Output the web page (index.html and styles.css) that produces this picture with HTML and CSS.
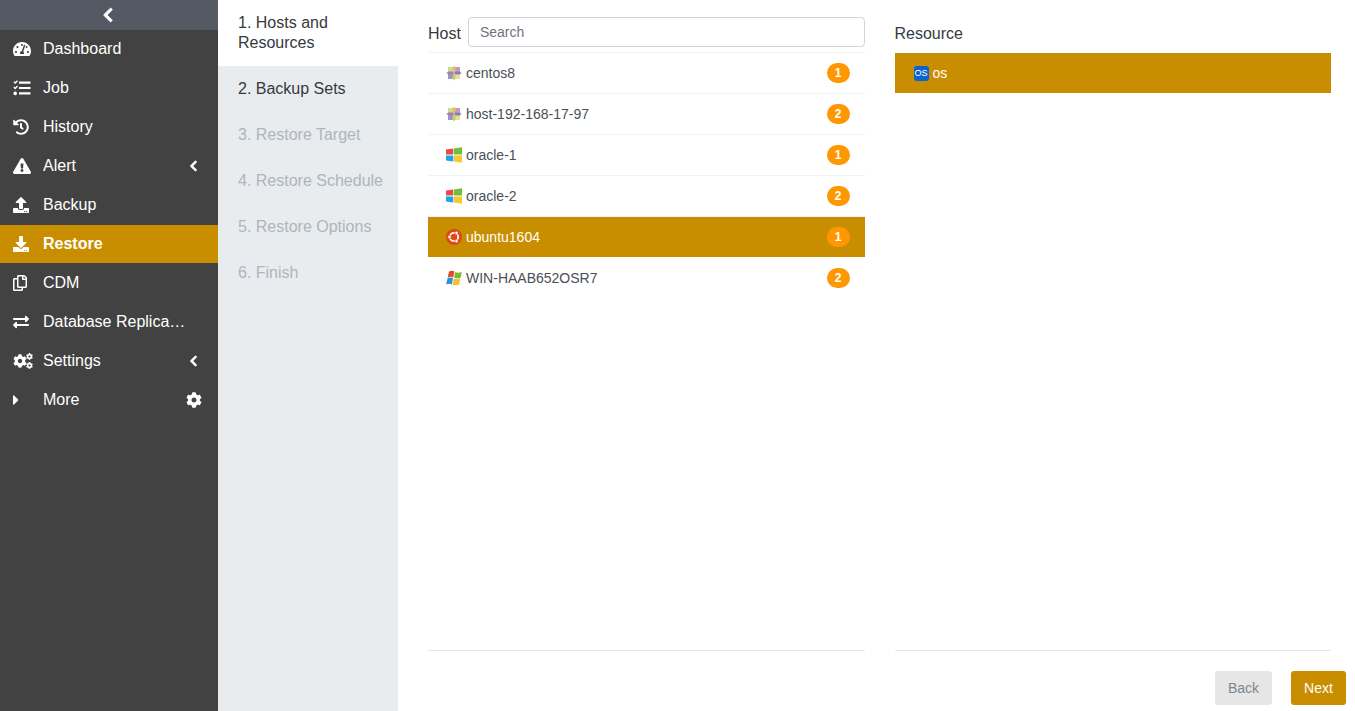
FILE: index.html
```html
<!DOCTYPE html>
<html lang="en">
<head>
    <meta charset="UTF-8">
    <meta name="viewport" content="width=device-width, initial-scale=1.0">
    <title>Restore</title>
    <link rel="stylesheet" href="styles.css">
</head>
<body>
    <svg class="defs" aria-hidden="true">
        <symbol id="i-cog" viewBox="0 0 512 512"><path d="M487.4 315.7l-42.6-24.6c4.3-23.2 4.3-47 0-70.2l42.6-24.6c4.9-2.8 7.1-8.6 5.5-14-11.1-35.6-30-67.8-54.7-94.6-3.8-4.1-10-5.1-14.8-2.3L380.8 110c-17.9-15.4-38.5-27.3-60.8-35.1V25.8c0-5.6-3.9-10.5-9.4-11.7-36.7-8.2-74.3-7.8-109.2 0-5.5 1.2-9.4 6.1-9.4 11.7V75c-22.2 7.9-42.8 19.8-60.8 35.1L88.7 85.5c-4.9-2.8-11-1.9-14.8 2.3-24.7 26.7-43.6 58.9-54.7 94.6-1.7 5.4.6 11.2 5.5 14L67.3 221c-4.3 23.2-4.3 47 0 70.2l-42.6 24.6c-4.9 2.8-7.1 8.6-5.5 14 11.1 35.6 30 67.8 54.7 94.6 3.8 4.1 10 5.1 14.8 2.3l42.6-24.6c17.9 15.4 38.5 27.3 60.8 35.1v49.2c0 5.6 3.9 10.5 9.4 11.7 36.7 8.2 74.3 7.8 109.2 0 5.5-1.2 9.4-6.1 9.4-11.7v-49.2c22.2-7.9 42.8-19.8 60.8-35.1l42.6 24.6c4.9 2.8 11 1.9 14.8-2.3 24.7-26.7 43.6-58.9 54.7-94.6 1.5-5.5-.7-11.3-5.6-14.1zM256 336c-44.1 0-80-35.9-80-80s35.9-80 80-80 80 35.9 80 80-35.9 80-80 80z"/></symbol>
        <symbol id="i-chevron" viewBox="0 0 320 512"><path d="M34.52 239.03L228.87 44.69c9.37-9.37 24.57-9.37 33.94 0l22.67 22.67c9.36 9.36 9.37 24.52.04 33.9L131.49 256l154.02 154.75c9.34 9.38 9.32 24.54-.04 33.9l-22.67 22.67c-9.37 9.37-24.57 9.37-33.94 0L34.52 272.97c-9.37-9.37-9.37-24.57 0-33.94z"/></symbol>
        <symbol id="i-centos" viewBox="0 0 16 16">
            <path fill="#c4e08f" d="M2 2h5.2v5.2H2z"/>
            <path fill="#c39ac5" d="M8.8 2H14v5.2H8.8z"/>
            <path fill="#f6d89c" d="M8.8 8.8H14V14H8.8z"/>
            <path fill="#9897c9" d="M2 8.8h5.2V14H2z"/>
            <path fill="#f1bd62" d="M8 .5l1.4 2v4.2L8 8 6.6 6.7V2.5z"/>
            <path fill="#8180bd" d="M15.5 8l-2 1.4H9.3L8 8l1.3-1.4h4.2z"/>
            <path fill="#b3d572" d="M8 15.5l-1.4-2V9.3L8 8l1.4 1.3v4.2z"/>
            <path fill="#b078b2" d="M.5 8l2-1.4h4.2L8 8 6.7 9.4H2.5z"/>
        </symbol>
        <symbol id="i-windows" viewBox="0 0 16 16">
            <path fill="#ea4a45" d="M0 2.6l7.3-1v6H0z"/>
            <path fill="#6ebf3b" d="M8 1.4L16 .2v7.4H8z"/>
            <path fill="#1fa3e5" d="M0 8.4h7.3v6L0 13.4z"/>
            <path fill="#f7c92f" d="M8 8.4h8v7.4l-8-1.2z"/>
        </symbol>
    </svg>

    <div class="app">
        <aside class="sidebar">
            <div class="sidebar-toggle">
                <svg class="chevron-top"><use href="#i-chevron"/></svg>
            </div>
            <ul class="nav">
                <li class="nav-item">
                    <svg class="nav-icon" viewBox="0 0 576 512"><path d="M288 32C128.94 32 0 160.94 0 320c0 52.8 14.25 102.26 39.06 144.8 5.61 9.62 16.3 15.2 27.44 15.2h443c11.14 0 21.83-5.58 27.44-15.2C561.75 422.26 576 372.8 576 320c0-159.06-128.94-288-288-288zm0 64c14.71 0 26.58 10.13 30.32 23.65-1.11 2.26-2.64 4.23-3.45 6.67l-9.22 27.67c-5.13 3.49-10.97 6.01-17.64 6.01-17.67 0-32-14.33-32-32S270.33 96 288 96zM96 384c-17.67 0-32-14.33-32-32s14.33-32 32-32 32 14.33 32 32-14.33 32-32 32zm48-160c-17.67 0-32-14.33-32-32s14.33-32 32-32 32 14.33 32 32-14.33 32-32 32zm246.77-72.41l-61.33 184C343.13 347.33 352 364.54 352 384c0 11.72-3.38 22.55-8.88 32H232.88c-5.5-9.45-8.88-20.28-8.88-32 0-33.94 26.5-61.43 59.9-63.59l61.34-184.01c4.17-12.56 17.73-19.45 30.36-15.17 12.57 4.19 19.35 17.79 15.17 30.36zm14.66 57.2l15.52-46.55c3.47-1.29 7.13-2.23 11.05-2.23 17.67 0 32 14.33 32 32s-14.33 32-32 32c-11.38-.01-20.89-6.28-26.57-15.22zM480 384c-17.67 0-32-14.33-32-32s14.33-32 32-32 32 14.33 32 32-14.33 32-32 32z"/></svg>
                    <span class="nav-label">Dashboard</span>
                </li>
                <li class="nav-item">
                    <svg class="nav-icon" viewBox="0 0 18 16"><path d="M6 1.5h11.5v2.2H6zM6 6.9h11.5v2.2H6zM6 12.3h11.5v2.2H6z"/><path d="M.4 2.2l1-1 .8.8L4 .2l1 1-2.8 2.9zM.4 7.6l1-1 .8.8L4 5.6l1 1-2.8 2.9z"/><circle cx="2.2" cy="13.4" r="1.8"/></svg>
                    <span class="nav-label">Job</span>
                </li>
                <li class="nav-item">
                    <svg class="nav-icon" viewBox="0 0 512 512" preserveAspectRatio="xMinYMid"><path d="M504 255.531c.253 136.64-111.18 248.372-247.82 248.468-59.015.042-113.223-20.53-155.822-54.911-11.077-8.94-11.905-25.541-1.839-35.607l11.267-11.267c8.609-8.609 22.353-9.551 31.891-1.984C173.062 425.135 212.781 440 256 440c101.705 0 184-82.311 184-184 0-101.705-82.311-184-184-184-48.814 0-93.149 18.969-126.068 49.932l50.754 50.754c10.08 10.08 2.941 27.314-11.313 27.314H24c-8.837 0-16-7.163-16-16V38.627c0-14.254 17.234-21.393 27.314-11.314l49.372 49.372C129.209 34.136 189.552 8 256 8c136.81 0 247.747 110.78 248 247.531zm-180.912 78.784l9.823-12.63c8.138-10.463 6.253-25.542-4.21-33.679L288 256.349V152c0-13.255-10.745-24-24-24h-16c-13.255 0-24 10.745-24 24v135.651l65.409 50.874c10.463 8.137 25.541 6.253 33.679-4.21z"/></svg>
                    <span class="nav-label">History</span>
                </li>
                <li class="nav-item">
                    <svg class="nav-icon" viewBox="0 0 576 512"><path d="M569.517 440.013C587.975 472.007 564.806 512 527.94 512H48.054c-36.937 0-59.999-40.055-41.577-71.987L246.423 23.985c18.467-32.009 64.72-31.951 83.154 0l239.94 416.028zM288 354c-25.405 0-46 20.595-46 46s20.595 46 46 46 46-20.595 46-46-20.595-46-46-46zm-43.673-165.346l7.418 136c.347 6.364 5.609 11.346 11.982 11.346h48.546c6.373 0 11.635-4.982 11.982-11.346l7.418-136c.375-6.874-5.098-12.654-11.982-12.654h-63.383c-6.884 0-12.356 5.78-11.981 12.654z"/></svg>
                    <span class="nav-label">Alert</span>
                    <svg class="nav-chevron"><use href="#i-chevron"/></svg>
                </li>
                <li class="nav-item">
                    <svg class="nav-icon" viewBox="0 0 512 512" preserveAspectRatio="xMinYMid"><path d="M296 384h-80c-13.3 0-24-10.7-24-24V192h-87.7c-17.8 0-26.7-21.5-14.1-34.1L242.3 5.7c7.5-7.5 19.8-7.5 27.3 0l152.2 152.2c12.6 12.6 3.7 34.1-14.1 34.1H320v168c0 13.3-10.7 24-24 24zm216-8v112c0 13.3-10.7 24-24 24H24c-13.3 0-24-10.7-24-24V376c0-13.3 10.7-24 24-24h136v8c0 30.9 25.1 56 56 56h80c30.9 0 56-25.1 56-56v-8h136c13.3 0 24 10.7 24 24zm-124 88c0-11-9-20-20-20s-20 9-20 20 9 20 20 20 20-9 20-20zm64 0c0-11-9-20-20-20s-20 9-20 20 9 20 20 20 20-9 20-20z"/></svg>
                    <span class="nav-label">Backup</span>
                </li>
                <li class="nav-item active">
                    <svg class="nav-icon" viewBox="0 0 512 512" preserveAspectRatio="xMinYMid"><path d="M216 0h80c13.3 0 24 10.7 24 24v168h87.7c17.8 0 26.7 21.5 14.1 34.1L269.7 378.3c-7.5 7.5-19.8 7.5-27.3 0L90.1 226.1c-12.6-12.6-3.7-34.1 14.1-34.1H192V24c0-13.3 10.7-24 24-24zm296 376v112c0 13.3-10.7 24-24 24H24c-13.3 0-24-10.7-24-24V376c0-13.3 10.7-24 24-24h146.7l49 49c20.1 20.1 52.5 20.1 72.6 0l49-49H488c13.3 0 24 10.7 24 24zm-124 88c0-11-9-20-20-20s-20 9-20 20 9 20 20 20 20-9 20-20zm64 0c0-11-9-20-20-20s-20 9-20 20 9 20 20 20 20-9 20-20z"/></svg>
                    <span class="nav-label">Restore</span>
                </li>
                <li class="nav-item">
                    <svg class="nav-icon" viewBox="0 0 448 512" preserveAspectRatio="xMinYMid"><path d="M433.941 65.941l-51.882-51.882A48 48 0 0 0 348.118 0H176c-26.51 0-48 21.49-48 48v48H48c-26.51 0-48 21.49-48 48v320c0 26.51 21.49 48 48 48h224c26.51 0 48-21.49 48-48v-48h80c26.51 0 48-21.49 48-48V99.882a48 48 0 0 0-14.059-33.941zM266 464H54a6 6 0 0 1-6-6V150a6 6 0 0 1 6-6h74v224c0 26.51 21.49 48 48 48h96v42a6 6 0 0 1-6 6zm128-96H182a6 6 0 0 1-6-6V54a6 6 0 0 1 6-6h106v88c0 13.255 10.745 24 24 24h88v202a6 6 0 0 1-6 6zm6-256h-64V48h9.632c1.591 0 3.117.632 4.243 1.757l48.368 48.368a6 6 0 0 1 1.757 4.243V112z"/></svg>
                    <span class="nav-label">CDM</span>
                </li>
                <li class="nav-item">
                    <svg class="nav-icon" viewBox="0 0 512 512" preserveAspectRatio="xMinYMid"><path d="M0 168v-16c0-13.255 10.745-24 24-24h360V80c0-21.367 25.899-32.042 40.971-16.971l80 80c9.372 9.373 9.372 24.569 0 33.941l-80 80C409.956 271.982 384 261.456 384 240v-48H24c-13.255 0-24-10.745-24-24zm488 152H128v-48c0-21.314-25.862-32.08-40.971-16.971l-80 80c-9.372 9.373-9.372 24.569 0 33.941l80 80C102.057 463.997 128 453.437 128 432v-48h360c13.255 0 24-10.745 24-24v-16c0-13.255-10.745-24-24-24z"/></svg>
                    <span class="nav-label">Database Replication</span>
                </li>
                <li class="nav-item">
                    <svg class="nav-icon nav-icon-wide" viewBox="0 0 20 16">
                        <use href="#i-cog" x="0" y="1" width="14" height="14"/>
                        <use href="#i-cog" x="13" y="0" width="7" height="7"/>
                        <use href="#i-cog" x="13" y="9" width="7" height="7"/>
                    </svg>
                    <span class="nav-label">Settings</span>
                    <svg class="nav-chevron"><use href="#i-chevron"/></svg>
                </li>
                <li class="nav-item">
                    <svg class="nav-icon nav-caret" viewBox="0 0 192 512"><path d="M0 384.662V127.338c0-17.818 21.543-26.741 34.142-14.142l128.662 128.662c7.81 7.81 7.81 20.474 0 28.284L34.142 398.804C21.543 411.404 0 402.48 0 384.662z"/></svg>
                    <span class="nav-label">More</span>
                    <svg class="nav-cog"><use href="#i-cog"/></svg>
                </li>
            </ul>
        </aside>

        <nav class="steps">
            <div class="step current">1. Hosts and Resources</div>
            <div class="step done">2. Backup Sets</div>
            <div class="step">3. Restore Target</div>
            <div class="step">4. Restore Schedule</div>
            <div class="step">5. Restore Options</div>
            <div class="step">6. Finish</div>
        </nav>

        <main class="content">
            <div class="columns">
                <section class="column">
                    <div class="column-head">
                        <label class="column-title" for="host-search">Host</label>
                        <input class="search" id="host-search" type="text" placeholder="Search">
                    </div>
                    <ul class="list list-hosts">
                        <li class="list-row">
                            <svg class="os-icon"><use href="#i-centos"/></svg>
                            <span class="row-name">centos8</span>
                            <span class="badge">1</span>
                        </li>
                        <li class="list-row">
                            <svg class="os-icon"><use href="#i-centos"/></svg>
                            <span class="row-name">host-192-168-17-97</span>
                            <span class="badge">2</span>
                        </li>
                        <li class="list-row">
                            <svg class="os-icon"><use href="#i-windows"/></svg>
                            <span class="row-name">oracle-1</span>
                            <span class="badge">1</span>
                        </li>
                        <li class="list-row">
                            <svg class="os-icon"><use href="#i-windows"/></svg>
                            <span class="row-name">oracle-2</span>
                            <span class="badge">2</span>
                        </li>
                        <li class="list-row selected">
                            <svg class="os-icon" viewBox="0 0 16 16">
                                <circle cx="8" cy="8" r="8" fill="#dd4814"/>
                                <circle cx="8" cy="8" r="4.2" fill="none" stroke="#fff" stroke-width="1.8"/>
                                <circle cx="3.4" cy="8" r="1.7" fill="#fff" stroke="#dd4814" stroke-width=".6"/>
                                <circle cx="10.5" cy="3.9" r="1.7" fill="#fff" stroke="#dd4814" stroke-width=".6"/>
                                <circle cx="10.5" cy="12.1" r="1.7" fill="#fff" stroke="#dd4814" stroke-width=".6"/>
                            </svg>
                            <span class="row-name">ubuntu1604</span>
                            <span class="badge">1</span>
                        </li>
                        <li class="list-row">
                            <svg class="os-icon" viewBox="0 0 16 16">
                                <path fill="#e2492f" d="M3 1.4C5 .4 6.8.4 8.4 1.4L7.2 7.4C5.6 6.4 3.6 6.4 1.7 7.4z"/>
                                <path fill="#7db93c" d="M9.2 2C10.9 3 12.8 3 15.8 2L14.6 7.8C12.2 8.8 10.4 8.6 8 7.6z"/>
                                <path fill="#2b8fd8" d="M1.5 8.2C3.4 7.2 5.4 7.2 7 8.2L5.8 14.4C4 13.4 2.2 13.4 .2 14.4z"/>
                                <path fill="#f5c02c" d="M7.8 8.5C10.2 9.5 12.2 9.5 14.4 8.6L13.2 14.6C10.8 15.6 8.8 15.6 6.6 14.4z"/>
                            </svg>
                            <span class="row-name">WIN-HAAB652OSR7</span>
                            <span class="badge">2</span>
                        </li>
                    </ul>
                </section>

                <section class="column">
                    <div class="column-head">
                        <span class="column-title">Resource</span>
                    </div>
                    <ul class="list">
                        <li class="list-row selected resource-row">
                            <span class="os-tag">OS</span>
                            <span class="row-name">os</span>
                        </li>
                    </ul>
                </section>
            </div>

            <div class="actions">
                <button class="btn btn-back" type="button">Back</button>
                <button class="btn btn-next" type="button">Next</button>
            </div>
        </main>
    </div>
</body>
</html>
```

FILE: styles.css
```css
* {
    box-sizing: border-box;
}
html, body {
    height: 100%;
}
body {
    margin: 0;
    font-family: "Liberation Sans", Arial, sans-serif;
    font-size: 16px;
    background-color: #fff;
    overflow: hidden;
}
ul {
    list-style-type: none;
    margin: 0;
    padding: 0;
}
.defs {
    display: none;
}
.app {
    display: flex;
    height: 100%;
}

/* Sidebar */
.sidebar {
    flex: 0 0 218px;
    background-color: #424242;
    color: #fff;
}
.sidebar-toggle {
    display: flex;
    justify-content: center;
    align-items: center;
    height: 30px;
    padding-right: 3px;
    background-color: #545964;
}
.chevron-top {
    width: 10px;
    height: 16px;
    fill: #fff;
    stroke: #fff;
    stroke-width: 30px;
}
.nav-item {
    display: flex;
    align-items: center;
    height: 39px;
    padding: 0 15px 0 13px;
    border-bottom: 1px solid #424242;
}
.nav-item.active {
    background-color: #c98e00;
    font-weight: bold;
}
.nav-icon {
    flex: 0 0 18px;
    width: 18px;
    height: 16px;
    margin-right: 12px;
    fill: #fff;
}
.nav-icon-wide {
    flex: 0 0 20px;
    width: 20px;
    margin-right: 10px;
}
.nav-caret {
    flex: 0 0 6px;
    width: 6px;
    margin-right: 24px;
}
.nav-label {
    flex: 1;
    min-width: 0;
    white-space: nowrap;
    overflow: hidden;
    text-overflow: ellipsis;
}
.nav-item .nav-label {
    max-width: 143px;
}
.nav-chevron {
    width: 9px;
    height: 12px;
    margin-left: auto;
    margin-right: 5px;
    fill: #fff;
    stroke: #fff;
    stroke-width: 30px;
}
.nav-cog {
    width: 16px;
    height: 16px;
    margin-left: auto;
    margin-right: 1px;
    fill: #fff;
}

/* Steps */
.steps {
    flex: 0 0 180px;
    background-color: #e9ecef;
}
.step {
    padding: 13px 10px 13px 20px;
    line-height: 20px;
    color: #adb5bd;
}
.step.current {
    background-color: #fff;
    color: #343a40;
}
.step.done {
    color: #343a40;
}

/* Main area */
.content {
    flex: 1;
    display: flex;
    flex-direction: column;
    padding: 17px 9px 6px 30px;
}
.columns {
    flex: 1;
    display: flex;
    gap: 30px;
    padding-right: 15px;
    min-height: 0;
}
.column {
    flex: 1;
    display: flex;
    flex-direction: column;
    min-width: 0;
    border-bottom: 1px solid #e6e6e6;
}
.column-head {
    display: flex;
    align-items: center;
    gap: 7px;
    height: 30px;
    margin-bottom: 6px;
    color: #343a40;
}
.column-title {
    padding-top: 4px;
}
.search {
    flex: 1;
    height: 30px;
    min-width: 0;
    padding: 0 11px;
    border: 1px solid #ced4da;
    border-radius: 4px;
    font-family: inherit;
    font-size: 14px;
    color: #495057;
}
.search::placeholder {
    color: #6c757d;
}
.list-hosts {
    border-top: 1px solid #f2f2f2;
    margin-top: -1px;
}
.list-row {
    display: flex;
    align-items: center;
    height: 41px;
    padding: 0 15px 0 18px;
    border-bottom: 1px solid #f2f2f2;
    font-size: 14px;
    color: #495057;
}
.list-row:last-child {
    border-bottom-color: transparent;
}
.list-row.selected {
    height: 41px;
    background-color: #c98e00;
    border-bottom: 1px solid #fff;
    color: #fff;
}
.resource-row {
    padding-left: 19px;
}
.os-icon {
    flex: 0 0 16px;
    width: 16px;
    height: 16px;
    margin-right: 4px;
}
.os-tag {
    display: flex;
    justify-content: center;
    align-items: center;
    width: 15px;
    height: 15px;
    margin-right: 4px;
    border-radius: 3px;
    background-color: #0b63ce;
    font-size: 9px;
    color: #fff;
}
.row-name {
    flex: 1;
}
.badge {
    width: 23px;
    height: 20px;
    border-radius: 10px;
    background-color: #ff9800;
    font-size: 12px;
    font-weight: bold;
    line-height: 20px;
    text-align: center;
    color: #fff;
}

/* Buttons */
.actions {
    display: flex;
    justify-content: flex-end;
    gap: 19px;
    padding-top: 20px;
}
.btn {
    height: 34px;
    padding: 0 13px;
    border: none;
    border-radius: 3px;
    font-family: inherit;
    font-size: 14px;
    color: #fff;
}
.btn-back {
    width: 57px;
    background-color: #e6e6e6;
    color: #7d8791;
}
.btn-next {
    width: 55px;
    background-color: #c98e00;
}
```
